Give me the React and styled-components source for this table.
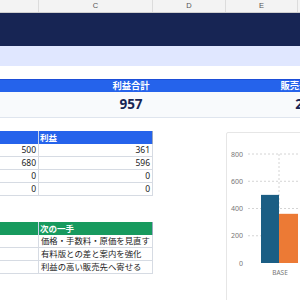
import React from 'react';
import styled, { createGlobalStyle } from 'styled-components';

const GlobalStyle = createGlobalStyle`
  body {
    margin: 0;
    background: #ffffff;
    font-family: "Noto Sans", "Noto Sans CJK JP", sans-serif;
  }
`;

const Sheet = styled.div`
  width: 300px;
  height: 300px;
  overflow: hidden;
  background: #fff;
`;

const ColHeader = styled.div`
  display: grid;
  grid-template-columns: 39px 114px 73px 72px 40px;
  height: 12px;
  background: #f3f3f3;
  border-bottom: 1px solid #cfcfcf;
`;

const ColLabel = styled.div`
  border-right: 1px solid #dcdcdc;
  font-size: 7.5px;
  line-height: 12px;
  color: #555;
  text-align: center;
  font-family: "Liberation Sans", sans-serif;
`;

const Band = styled.div`
  height: ${(p) => p.h}px;
  background: ${(p) => p.bg};
`;

const KpiHead = styled.div`
  display: grid;
  grid-template-columns: 47px 168px 168px;
  height: 12px;
  background: #2563eb;
  color: #fff;
  font-weight: 700;
  font-size: 9.3px;
  line-height: 12px;
  border-top: 1px solid #1d4ed8;
`;

const KpiRow = styled.div`
  display: grid;
  grid-template-columns: 47px 168px 168px;
  height: 25px;
  background: #f8fafc;
  border-bottom: 1px solid #dfe5ee;
  color: #172554;
  font-weight: 700;
  font-size: 13.5px;
  line-height: 25px;
  font-family: "Open Sans", "Noto Sans", sans-serif;
`;

const Cell = styled.div`
  text-align: center;
  white-space: nowrap;
`;

const Lower = styled.div`
  display: flex;
  margin-top: 13px;
`;

const LeftCol = styled.div`
  width: 226px;
  flex: 0 0 226px;
`;

const Table = styled.div`
  display: grid;
  grid-template-columns: 39px 114px;
  margin-bottom: ${(p) => p.mb || 0}px;
`;

const Th = styled.div`
  height: 13px;
  background: ${(p) => p.bg};
  color: #fff;
  font-weight: 700;
  font-size: 8.5px;
  line-height: 13px;
  padding-left: 1px;
  border-right: 1px solid ${(p) => (p.last ? '#9aa7c0' : '#c9d4ea')};
`;

const Td = styled.div`
  height: 12px;
  border-bottom: 1px solid #d6dbe3;
  border-right: 1px solid #d6dbe3;
  font-size: ${(p) => (p.jp ? 8.4 : 8.5)}px;
  line-height: 12px;
  color: #222;
  text-align: ${(p) => (p.jp ? 'left' : 'right')};
  padding: 0 2px;
  white-space: nowrap;
  overflow: hidden;
`;

const ChartCard = styled.div`
  flex: 0 0 100px;
  height: 180px;
  margin-top: 1px;
  border: 1px solid #e6e6e6;
  border-radius: 2px;
  background: #fff;
`;

const ticks = [800, 600, 400, 200, 0];

function Chart() {
  const y = (v) => 130 - v * 0.13625;
  return (
    <svg width="100" height="180" viewBox="0 0 100 180">
      {ticks.map((t) => (
        <g key={t}>
          <text
            x="16"
            y={y(t) + 2.5}
            textAnchor="end"
            fontSize="7"
            fill="#777"
            fontFamily="Noto Sans, sans-serif"
          >
            {t}
          </text>
          {t > 0 && (
            <line x1="21" x2="100" y1={y(t)} y2={y(t)} stroke="#d4d4d4" strokeDasharray="2 2" />
          )}
        </g>
      ))}
      <line x1="52" x2="52" y1="21" y2="130" stroke="#d4d4d4" strokeDasharray="2 2" />
      <rect x="34" y={y(500)} width="18" height={130 - y(500)} fill="#1b5e84" />
      <rect x="52" y={y(361)} width="19" height={130 - y(361)} fill="#ec7a35" />
      <text
        x="53"
        y="142"
        textAnchor="middle"
        fontSize="6.5"
        fill="#777"
        fontFamily="Noto Sans, sans-serif"
      >
        BASE
      </text>
    </svg>
  );
}

const numbers = [
  ['500', '361'],
  ['680', '596'],
  ['0', '0'],
  ['0', '0'],
];

const actions = ['価格・手数料・原価を見直す', '有料版との差と案内を強化', '利益の高い販売先へ寄せる'];

export default function App() {
  return (
    <Sheet>
      <GlobalStyle />
      <ColHeader>
        <ColLabel />
        <ColLabel>C</ColLabel>
        <ColLabel>D</ColLabel>
        <ColLabel>E</ColLabel>
        <ColLabel />
      </ColHeader>
      <Band h={33} bg="#172554" />
      <Band h={20} bg="#e0e7ff" />
      <Band h={13} bg="#ffffff" />
      <KpiHead>
        <Cell />
        <Cell>利益合計</Cell>
        <Cell>販売先数</Cell>
      </KpiHead>
      <KpiRow>
        <Cell />
        <Cell>957</Cell>
        <Cell>2</Cell>
      </KpiRow>
      <Lower>
        <LeftCol>
          <Table mb={26}>
            <Th bg="#2563eb" />
            <Th bg="#2563eb" last>利益</Th>
            {numbers.map(([a, b], i) => (
              <React.Fragment key={i}>
                <Td>{a}</Td>
                <Td>{b}</Td>
              </React.Fragment>
            ))}
          </Table>
          <Table>
            <Th bg="#179a5e" />
            <Th bg="#179a5e" last>次の一手</Th>
            {actions.map((t) => (
              <React.Fragment key={t}>
                <Td jp />
                <Td jp>{t}</Td>
              </React.Fragment>
            ))}
          </Table>
        </LeftCol>
        <ChartCard>
          <Chart />
        </ChartCard>
      </Lower>
    </Sheet>
  );
}
